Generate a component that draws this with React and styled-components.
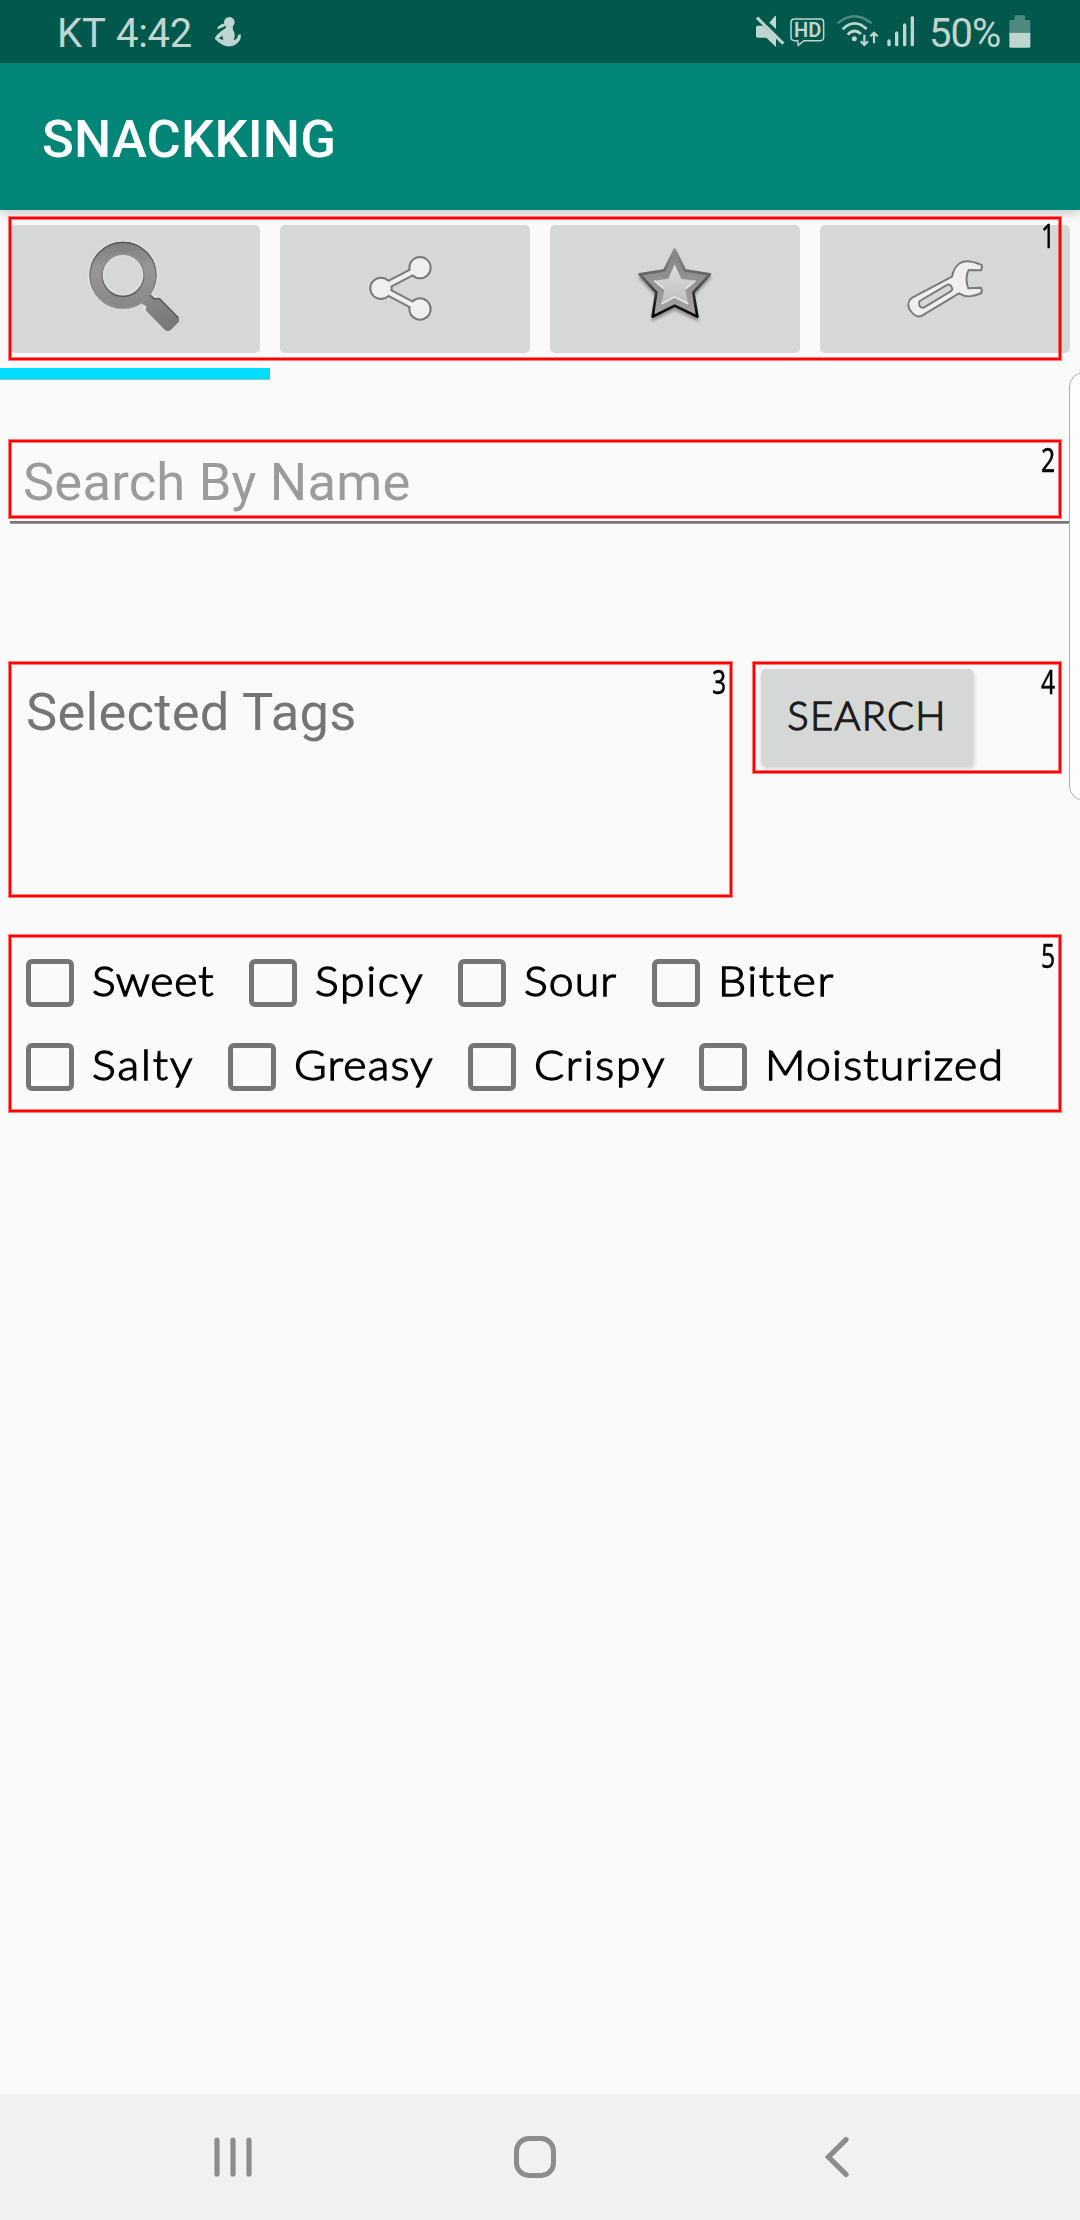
import React from 'react';
import styled, { createGlobalStyle } from 'styled-components';

const GlobalStyle = createGlobalStyle`
  * { box-sizing: border-box; }
  html, body { margin: 0; padding: 0; background: #fafafa; }
  body { font-family: Roboto, "Liberation Sans", sans-serif; }
  svg { display: block; flex: none; }
`;

const LIGHT = '#bfd5d2';
const DIM = '#4e8a81';

const Screen = styled.div`
  width: 1080px;
  height: 2220px;
  display: flex;
  flex-direction: column;
  background: #fafafa;
  overflow: hidden;
`;

const StatusBar = styled.header`
  height: 63px;
  flex: none;
  display: flex;
  align-items: flex-start;
  padding: 0 49px 0 57px;
  background: #00574b;
  color: ${LIGHT};
`;

const StatusText = styled.span`
  font-size: 40px;
  line-height: 68px;
  white-space: pre;
  letter-spacing: ${(p) => p.$spacing || 0}px;
  width: ${(p) => p.$width}px;
  padding-left: ${(p) => p.$indent || 0}px;
`;

const Spacer = styled.div`
  flex: 1;
`;

const AppBar = styled.div`
  height: 147px;
  flex: none;
  display: flex;
  align-items: center;
  padding: 4px 42px 0;
  background: #008577;
  box-shadow: 0 2px 12px rgba(0, 0, 0, 0.24);
  clip-path: inset(0 0 -20px 0);
`;

const Title = styled.h1`
  margin: 0;
  color: #fff;
  font-size: 52.5px;
  font-weight: 500;
  line-height: 60px;
  letter-spacing: 0.2px;
`;

const Main = styled.main`
  position: relative;
  flex: 1;
  display: flex;
  flex-direction: column;
`;

const Frame = styled.div`
  position: absolute;
  top: ${(p) => p.$top}px;
  left: ${(p) => p.$left}px;
  width: ${(p) => p.$width}px;
  height: ${(p) => p.$height}px;
  border: 2px solid #f00;
  box-shadow: 0 0 0 1px rgba(255, 0, 0, 0.5), inset 0 0 0 1px rgba(255, 0, 0, 0.5);
  pointer-events: none;
`;

const FrameNumber = styled.span`
  position: absolute;
  top: ${(p) => p.$top || 0}px;
  right: 4px;
  color: #000;
  font-family: "Noto Sans", "Open Sans", sans-serif;
  font-size: 33.5px;
  line-height: 40px;
  -webkit-text-stroke: 0.4px #000;
  transform: scaleX(0.74);
  transform-origin: right center;
`;

const Tabs = styled.nav`
  position: relative;
  display: flex;
  gap: 20px;
  height: 158px;
  padding: 15px 10px;
`;

const TabButton = styled.button`
  width: 250px;
  height: 128px;
  padding: 0;
  border: 0;
  border-radius: 5px;
  background: #d6d8d7;
`;

const Indicator = styled.div`
  width: 270px;
  height: 11px;
  margin-bottom: 64px;
  background: #00ddff;
  box-shadow: 0 1px rgba(60, 190, 215, 0.7);
`;

const SearchField = styled.div`
  position: relative;
  height: 80px;
  margin: 0 10px;
  border-bottom: 2px solid #757575;
  box-shadow: 0 1px #9c9c9c;
`;

const Input = styled.input`
  display: block;
  width: 100%;
  height: 78px;
  padding: 0 13px;
  border: 0;
  outline: 0;
  background: transparent;
  font: 400 52.5px/62px Roboto, sans-serif;
  letter-spacing: 0.2px;
  &::placeholder { color: #9b9b9b; opacity: 1; }
`;

const TagRow = styled.section`
  position: relative;
  display: flex;
  gap: 29px;
  height: 237px;
  margin: 138px 0 0 8px;
`;

const SelectedTags = styled.div`
  width: 724px;
  padding: 20px 18px;
  color: #757575;
  font-size: 52.5px;
  line-height: 62px;
  letter-spacing: 0.25px;
`;

const SearchButton = styled.button`
  width: 212px;
  height: 97px;
  margin-top: 8px;
  padding: 0 0 6px;
  border: 0;
  border-radius: 5px;
  background: #d6d8d7;
  box-shadow: 1px 2px 5px rgba(0, 0, 0, 0.2);
  color: #1c1c1c;
  font-family: Lato, sans-serif;
  font-size: 40px;
  font-weight: 300;
  line-height: 48px;
  letter-spacing: 1.2px;
  -webkit-text-stroke: 1.3px #1c1c1c;
`;

const Options = styled.section`
  position: relative;
  display: flex;
  flex-direction: column;
  gap: 36px;
  margin-top: 36px;
  padding: 25px 0 0 26px;
`;

const OptionRow = styled.div`
  display: flex;
  height: 48px;
`;

const Option = styled.label`
  display: flex;
  align-items: center;
  width: ${(p) => p.$width}px;
`;

const OptionLabel = styled.span`
  padding-bottom: 5px;
  color: #000;
  font-family: Lato, sans-serif;
  font-size: 40.5px;
  font-weight: 300;
  line-height: 48px;
  letter-spacing: ${(p) => p.$spacing}px;
  white-space: nowrap;
  -webkit-text-stroke: 1.3px #000;
  transform: scaleX(1.1);
  transform-origin: left center;
`;

const Box = styled.input`
  appearance: none;
  flex: none;
  width: 48px;
  height: 48px;
  margin: 0 18px 0 0;
  border: 5px solid #757575;
  border-radius: 6px;
`;

const EdgePanel = styled.aside`
  position: absolute;
  top: 162px;
  right: -20px;
  width: 31px;
  height: 429px;
  border: 1px solid #adadad;
  border-radius: 15px;
  background: #fdfdfd;
`;

const NavBar = styled.footer`
  height: 126px;
  flex: none;
  display: flex;
  align-items: center;
  padding-left: 214px;
  background: #f1f1f1;
`;

const NavSlot = styled.div`
  width: ${(p) => p.$width}px;
`;

function Messenger() {
  return (
    <svg width="28" height="48" viewBox="642 0 84 144" fill={LIGHT}>
      <circle cx="688" cy="67" r="16" />
      <path d="M680 78H698L699 90C706 101 705 112 700 121C710 119 714 113 714 105L722 103C726 118 713 136 692 139C676 141 661 133 645 117C643 109 661 94 675 86Z" />
      <path d="M652 84C658 74 667 69 677 72C680 80 664 83 652 88Z" />
      <path d="M656 115L667 107L670 121Z" fill="#00574b" />
    </svg>
  );
}

function StatusIcons() {
  return (
    <svg width="162" height="63" viewBox="45 0 486 189" fill="none" stroke={LIGHT}>
      <g fill={LIGHT} stroke="none">
        <path d="M88 68L104 49Q108 45 108 51V87Z" />
        <path d="M53 77H69L108 114V141L79 113H53Q48 113 48 108V82Q48 77 53 77Z" />
      </g>
      <path d="M51 53L130 131" strokeWidth="9" />
      <path d="M164 57H241Q251 57 251 67V112Q251 122 241 122H192L175 136L173 122H164Q153 122 153 112V67Q153 57 164 57Z" strokeWidth="4.5" />
      <text x="162" y="112" fill={LIGHT} stroke="none" fontFamily="Roboto" fontWeight="600" fontSize="58" textLength="82" lengthAdjust="spacingAndGlyphs">HD</text>
      <path d="M293 70Q343 27 395 70" stroke={DIM} strokeWidth="7" />
      <path d="M308 88Q343 53 380 87" strokeWidth="8" />
      <path d="M323 104Q343 83 363 102" strokeWidth="8" />
      <circle cx="343" cy="116" r="7.5" fill={LIGHT} stroke="none" />
      <path d="M373 104V134M362 124L373 135L384 124M402 130V99M391 109L402 98L413 109" strokeWidth="6.5" />
      <path d="M447 123V134M470 99V134M494 75V134M517 53V134" strokeWidth="10" strokeLinecap="round" />
    </svg>
  );
}

function Battery() {
  return (
    <svg width="22" height="63" viewBox="806 0 66 189">
      <path d="M823 60V49Q823 46 826 46H851Q854 46 854 49V60H866Q870 60 870 64V98H807V64Q807 60 811 60Z" fill={DIM} />
      <path d="M807 98H870V139Q870 143 866 143H811Q807 143 807 139Z" fill={LIGHT} />
    </svg>
  );
}

function SearchIcon() {
  return (
    <svg width="250" height="128" viewBox="30 75 750 384">
      <defs>
        <linearGradient id="ring" gradientUnits="userSpaceOnUse" x1="0" y1="126" x2="0" y2="326">
          <stop offset="0" stopColor="#7d7d7d" />
          <stop offset="0.4" stopColor="#979797" />
          <stop offset="1" stopColor="#868686" />
        </linearGradient>
        <linearGradient id="outer" x1="0" y1="0" x2="0" y2="1">
          <stop offset="0" stopColor="#505050" />
          <stop offset="0.6" stopColor="#7c7c7c" />
          <stop offset="1" stopColor="#999" />
        </linearGradient>
        <linearGradient id="inner" x1="0" y1="0" x2="0" y2="1">
          <stop offset="0" stopColor="#999" />
          <stop offset="0.5" stopColor="#7c7c7c" />
          <stop offset="1" stopColor="#555" />
        </linearGradient>
        <linearGradient id="handle" x1="0" y1="0" x2="1" y2="1">
          <stop offset="0" stopColor="#8b8b8b" />
          <stop offset="1" stopColor="#747474" />
        </linearGradient>
        <filter id="glow" x="-20%" y="-20%" width="140%" height="140%">
          <feGaussianBlur stdDeviation="4" />
        </filter>
      </defs>
      <g fill="none" stroke="#e0e1e0" filter="url(#glow)">
        <circle cx="369" cy="226" r="81" strokeWidth="46" />
        <path d="M445 303L517 374" strokeWidth="56" />
      </g>
      <path d="M423 309L440 320Q434 329 441 335L494 389Q503 397 512 390L533 369Q541 361 535 353L482 298Q475 291 465 297L449 282Z" fill="url(#handle)" />
      <path d="M449 284L465 298Q475 292 482 299L536 354" fill="none" stroke="#555" strokeWidth="4" />
      <circle cx="369" cy="226" r="81" fill="none" stroke="url(#ring)" strokeWidth="39" />
      <circle cx="369" cy="226" r="99" fill="none" stroke="url(#outer)" strokeWidth="4" />
      <circle cx="369" cy="226" r="63" fill="none" stroke="url(#inner)" strokeWidth="4" />
    </svg>
  );
}

function ShareIcon() {
  return (
    <svg width="250" height="128" viewBox="-180 75 750 384">
      <g fill="#7a7a7a" stroke="#7a7a7a">
        <path d="M240 204L123 265L240 327" fill="none" strokeWidth="25" />
        <circle cx="240" cy="203" r="35" stroke="none" />
        <circle cx="123" cy="265" r="35" stroke="none" />
        <circle cx="240" cy="327" r="35" stroke="none" />
      </g>
      <g fill="#efefef" stroke="#efefef">
        <path d="M240 204L123 265L240 327" fill="none" strokeWidth="13" />
        <circle cx="240" cy="203" r="29" stroke="none" />
        <circle cx="123" cy="265" r="29" stroke="none" />
        <circle cx="240" cy="327" r="29" stroke="none" />
      </g>
    </svg>
  );
}

function StarIcon() {
  const star = 'M1004 149L1035 211L1110 223L1060 277L1072 350L1004 317L938 350L949 277L899 223L973 211Z';
  return (
    <svg width="250" height="128" viewBox="630 75 750 384">
      <defs>
        <linearGradient id="starEdge" x1="0" y1="0" x2="0" y2="1">
          <stop offset="0" stopColor="#8f8f8f" />
          <stop offset="0.3" stopColor="#707070" />
          <stop offset="0.7" stopColor="#303030" />
          <stop offset="1" stopColor="#000" />
        </linearGradient>
        <linearGradient id="starFill" x1="0" y1="0" x2="0" y2="1">
          <stop offset="0" stopColor="#848484" />
          <stop offset="1" stopColor="#a4a4a4" />
        </linearGradient>
        <linearGradient id="starCore" x1="0" y1="0" x2="0" y2="1">
          <stop offset="0" stopColor="#dedede" />
          <stop offset="1" stopColor="#bdbdbd" />
        </linearGradient>
        <filter id="starShadow" x="-20%" y="-20%" width="140%" height="150%">
          <feGaussianBlur stdDeviation="5" />
        </filter>
      </defs>
      <path d={star} transform="translate(0 10)" fill="#777" stroke="#777" strokeWidth="6" opacity="0.75" filter="url(#starShadow)" />
      <path d={star} fill="url(#starFill)" stroke="url(#starEdge)" strokeWidth="8" strokeLinejoin="round" />
      <path d="M1004 193L1024 236L1068 242L1036 270L1045 312L1004 290L964 312L973 270L941 242L985 236Z" fill="url(#starCore)" />
      <path d="M943 242L972 266M1066 242L1037 266M964 312L1004 291L1045 312" fill="none" stroke="#e6e6e6" strokeWidth="5" />
    </svg>
  );
}

function WrenchIcon() {
  return (
    <svg width="250" height="128" viewBox="300 75 750 384">
      <g stroke="#7a7a7a" strokeWidth="6" strokeLinejoin="round">
        <path fill="#efefef" d="M696 230C702 200 720 184 742 184C758 184 775 191 785 195Q788 203 783 211L746 210C737 225 738 250 745 265L782 263Q788 270 784 279C764 290 738 293 717 280L606 347C591 355 576 340 568 327C562 312 567 299 577 293Z" />
        <path fill="#d6d8d7" d="M599 303L683 254Q692 252 697 267Q696 271 692 274L611 323C600 325 593 313 599 303Z" />
      </g>
    </svg>
  );
}

function RecentsIcon() {
  return (
    <svg width="38" height="42" viewBox="0 0 38 42" stroke="#8c8c8c" strokeWidth="5.2" strokeLinecap="round">
      <path d="M3 4V38M19 4V38M35 4V38" />
    </svg>
  );
}

function HomeIcon() {
  return (
    <svg width="44" height="44" viewBox="0 0 44 44" fill="none" stroke="#8c8c8c" strokeWidth="5">
      <rect x="3.5" y="3.5" width="37" height="37" rx="12.5" />
    </svg>
  );
}

function BackIcon() {
  return (
    <svg width="25" height="42" viewBox="0 0 25 42" fill="none" stroke="#8c8c8c" strokeWidth="5.2" strokeLinecap="round">
      <path d="M21 3.6L3.5 21L21 38.4" />
    </svg>
  );
}

const tabs = [
  { name: 'search', Icon: SearchIcon },
  { name: 'share', Icon: ShareIcon },
  { name: 'favorites', Icon: StarIcon },
  { name: 'settings', Icon: WrenchIcon },
];

const options = [
  [
    { label: 'Sweet', width: 223, spacing: 0.7 },
    { label: 'Spicy', width: 209, spacing: 1.5 },
    { label: 'Sour', width: 194, spacing: 1 },
    { label: 'Bitter', width: 220, spacing: 1.5 },
  ],
  [
    { label: 'Salty', width: 202, spacing: 1.8 },
    { label: 'Greasy', width: 240, spacing: 1.1 },
    { label: 'Crispy', width: 231, spacing: 1.7 },
    { label: 'Moisturized', width: 330, spacing: 1.1 },
  ],
];

export default function App() {
  return (
    <Screen>
      <GlobalStyle />
      <StatusBar>
        <StatusText $width={59}>KT</StatusText>
        <StatusText $width={98} $spacing={-0.3}>4:42</StatusText>
        <Messenger />
        <Spacer />
        <StatusIcons />
        <StatusText $width={92} $indent={12} $spacing={-1}>50%</StatusText>
        <Battery />
      </StatusBar>
      <AppBar>
        <Title>SNACKKING</Title>
      </AppBar>
      <Main>
        <Tabs>
          {tabs.map(({ name, Icon }) => (
            <TabButton key={name}><Icon /></TabButton>
          ))}
          <Frame $top={7} $left={9} $width={1052} $height={143}>
            <FrameNumber $top={-4}>1</FrameNumber>
          </Frame>
        </Tabs>
        <Indicator />
        <SearchField>
          <Input placeholder="Search By Name" />
          <Frame $top={-3} $left={-1} $width={1052} $height={78}>
            <FrameNumber $top={-3}>2</FrameNumber>
          </Frame>
        </SearchField>
        <TagRow>
          <SelectedTags>Selected Tags</SelectedTags>
          <SearchButton>SEARCH</SearchButton>
          <Frame $top={1} $left={1} $width={723} $height={235}>
            <FrameNumber $top={-3}>3</FrameNumber>
          </Frame>
          <Frame $top={1} $left={745} $width={308} $height={111}>
            <FrameNumber $top={-3}>4</FrameNumber>
          </Frame>
        </TagRow>
        <Options>
          {options.map((row, i) => (
            <OptionRow key={i}>
              {row.map((o) => (
                <Option key={o.label} $width={o.width}>
                  <Box type="checkbox" />
                  <OptionLabel $spacing={o.spacing}>{o.label}</OptionLabel>
                </Option>
              ))}
            </OptionRow>
          ))}
          <Frame $top={1} $left={9} $width={1052} $height={177}>
            <FrameNumber $top={-2}>5</FrameNumber>
          </Frame>
        </Options>
        <EdgePanel />
      </Main>
      <NavBar>
        <NavSlot $width={299}><RecentsIcon /></NavSlot>
        <NavSlot $width={312}><HomeIcon /></NavSlot>
        <NavSlot $width={25}><BackIcon /></NavSlot>
      </NavBar>
    </Screen>
  );
}
